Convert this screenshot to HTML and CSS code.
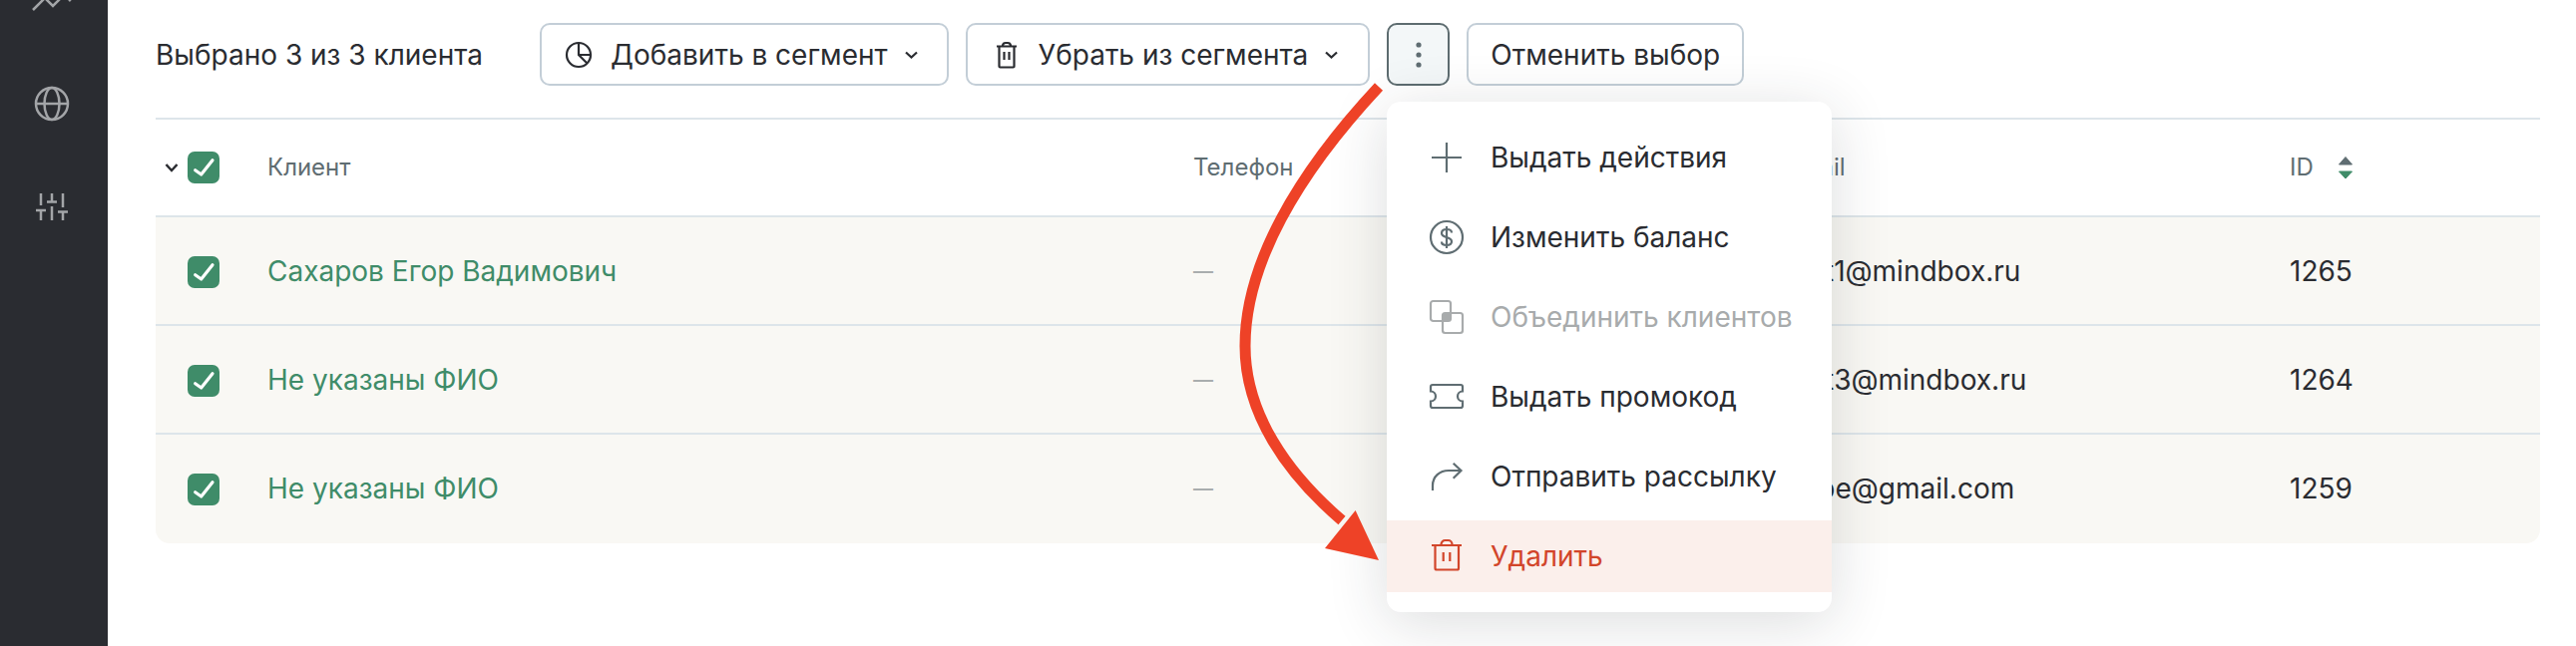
FILE: index.html
```html
<!DOCTYPE html>
<html lang="ru">
<head>
<meta charset="utf-8">
<title>Клиенты</title>
<link rel="stylesheet" href="styles.css">
</head>
<body>
<div class="app">
  <aside class="sidebar">
    <svg class="nav nav-chart" width="44" height="14" viewBox="0 0 44 14"><path d="M3 10L15 -2L23 6L31 -2M39 1L41 -1"/></svg>
    <svg class="nav nav-globe" width="36" height="36" viewBox="0 0 36 36"><circle cx="18" cy="18" r="16"/><ellipse cx="18" cy="18" rx="7.500" ry="16"/><path d="M2 18H34"/></svg>
    <svg class="nav nav-sliders" width="36" height="28" viewBox="0 0 36 28"><path d="M7 0V12M2 17H12M7 17V27M18 0V8.500M13 8.500H23M18 13V27M29 0V14M24 18.500H34M29 18.500V27"/></svg>
  </aside>
  <main class="content">
    <div class="toolbar">
      <span class="selected">Выбрано 3 из 3 клиента</span>
      <div class="actions">
        <button class="btn drop">
          <svg class="ic" width="28" height="28" viewBox="0 0 28 28"><circle cx="14" cy="14" r="12"/><path d="M14 2V14L22.500 22.500M14 14H26"/></svg>
          <span>Добавить в сегмент</span>
          <svg class="chev" width="15" height="8" viewBox="0 0 15 8"><path d="M2 1.500L7.500 6.500L13 1.500"/></svg>
        </button>
        <button class="btn drop wide">
          <svg class="ic" width="28" height="28" viewBox="0 0 28 28"><path d="M4 5.500H24M6.500 5.500V25.500Q6.500 26.500 7.500 26.500H20.500Q21.500 26.500 21.500 25.500V5.500M10 5.500V4.500A3 3 0 0 1 13 2H15A3 3 0 0 1 18 4.500V5.500M11.500 11V19M16.500 11V19"/></svg>
          <span>Убрать из сегмента</span>
          <svg class="chev" width="15" height="8" viewBox="0 0 15 8"><path d="M2 1.500L7.500 6.500L13 1.500"/></svg>
        </button>
        <button class="btn kebab" aria-label="Ещё">
          <svg width="6" height="26" viewBox="0 0 6 26"><circle cx="3" cy="3" r="2.600"/><circle cx="3" cy="13" r="2.600"/><circle cx="3" cy="23" r="2.600"/></svg>
        </button>
        <button class="btn">Отменить выбор</button>
      </div>
    </div>

    <div class="table">
      <div class="row head">
        <div class="c-check">
          <svg class="head-chev" width="14" height="9" viewBox="0 0 14 9"><path d="M1.500 1L7 7L12.500 1"/></svg>
          <span class="check"><svg width="32" height="32" viewBox="0 0 32 32"><path d="M7.700 18.700L13.700 23L25 8.700"/></svg></span>
        </div>
        <div class="label">Клиент</div>
        <div class="label">Телефон</div>
        <div class="label">Email</div>
        <div class="label c-id">ID
          <svg class="sort" width="14" height="22" viewBox="0 0 14 22"><path class="up" d="M7 0.500L13.500 8H0.500Z"/><path class="down" d="M0.500 15H13.500L7 22Z"/></svg>
        </div>
      </div>
      <div class="row body">
        <div class="c-check"><span class="check"><svg width="32" height="32" viewBox="0 0 32 32"><path d="M7.700 18.700L13.700 23L25 8.700"/></svg></span></div>
        <div class="link">Сахаров Егор Вадимович</div>
        <div class="dash">—</div>
        <div>test1@mindbox.ru</div>
        <div>1265</div>
      </div>
      <div class="row body">
        <div class="c-check"><span class="check"><svg width="32" height="32" viewBox="0 0 32 32"><path d="M7.700 18.700L13.700 23L25 8.700"/></svg></span></div>
        <div class="link">Не указаны ФИО</div>
        <div class="dash">—</div>
        <div>test3@mindbox.ru</div>
        <div>1264</div>
      </div>
      <div class="row body last">
        <div class="c-check"><span class="check"><svg width="32" height="32" viewBox="0 0 32 32"><path d="M7.700 18.700L13.700 23L25 8.700"/></svg></span></div>
        <div class="link">Не указаны ФИО</div>
        <div class="dash">—</div>
        <div>hope@gmail.com</div>
        <div>1259</div>
      </div>
    </div>
  </main>

  <div class="menu">
    <div class="item">
      <svg class="mi" width="36" height="36" viewBox="0 0 36 36"><path d="M18 3V33M3 18H33"/></svg>
      <span>Выдать действия</span>
    </div>
    <div class="item">
      <svg class="mi" width="36" height="36" viewBox="0 0 36 36"><circle cx="18" cy="18" r="16"/><path d="M23 13.500C23 11 20.500 10 18 10S13 11.200 13 14S15.500 17.300 18 18S23 19.500 23 22.300S20.500 26 18 26S13 25 13 22.500M18 7V29"/></svg>
      <span>Изменить баланс</span>
    </div>
    <div class="item disabled">
      <svg class="mi" width="36" height="36" viewBox="0 0 36 36"><rect x="2" y="2" width="20" height="20" rx="2.500"/><rect x="14" y="14" width="20" height="20" rx="2.500"/><rect class="fill" x="14" y="14" width="8" height="8" rx="1.500"/></svg>
      <span>Объединить клиентов</span>
    </div>
    <div class="item">
      <svg class="mi" width="36" height="36" viewBox="0 0 36 36"><path d="M4 6H32Q34 6 34 8V12.500A4.500 4.500 0 0 0 34 22.500V27Q34 29 32 29H4Q2 29 2 27V22.500A4.500 4.500 0 0 0 2 12.500V8Q2 6 4 6Z"/></svg>
      <span>Выдать промокод</span>
    </div>
    <div class="item">
      <svg class="mi" width="36" height="36" viewBox="0 0 36 36"><path d="M4 32V27C4 18 11 12 20 12H32.500M24.700 4.700L32.500 12L24.700 19.700"/></svg>
      <span>Отправить рассылку</span>
    </div>
    <div class="item danger">
      <svg class="mi" width="36" height="36" viewBox="0 0 36 36"><path d="M3 7H33M6.500 7V30Q6.500 31.500 8 31.500H28.500Q30 31.500 30 30V7M12.500 7V6A4 4 0 0 1 16.500 2H19.500A4 4 0 0 1 23.500 6V7M14.700 14V23M21.300 14V23"/></svg>
      <span>Удалить</span>
    </div>
  </div>

  <svg class="arrow" width="180" height="490" viewBox="1220 80 180 490">
    <path class="shaft" d="M1382 87C1300 175 1248 265 1248 347C1248 415 1290 475 1345 522"/>
    <path class="tip" d="M1358.600 512L1382 562L1328 550Z"/>
  </svg>
</div>
</body>
</html>
```
FILE: styles.css
```css
* { box-sizing: border-box; }
html, body { margin: 0; height: 100%; background: #fff; }
body { font-family: Inter, "Noto Sans", sans-serif; color: #2a2c31; font-size: 28px; overflow: hidden; }
button { font: inherit; color: inherit; }
svg { display: block; flex: none; }

.app { position: relative; display: flex; height: 648px; }

.sidebar { width: 108px; flex: none; background: #2a2c31; position: relative; overflow: hidden; display: flex; flex-direction: column; align-items: center; padding: 86px 4px 0 0; }
.nav { fill: none; stroke: #a3a5a8; stroke-width: 2.500; }
.nav-chart { position: absolute; left: 30px; top: 0; }
.nav-globe { margin-bottom: 72px; }

.content { flex: 1; padding: 23px 36px 0 48px; min-width: 0; }
.toolbar { display: flex; align-items: center; height: 63px; margin-bottom: 32px; }
.selected { width: 385px; flex: none; }
.actions { display: flex; gap: 17px; }
.btn { height: 63px; padding: 0 22px; background: #fff; border: 2px solid #c3ced7; border-radius: 10px; display: flex; align-items: center; white-space: nowrap; }
.drop { padding: 0 28px 0 23px; }
.wide { padding: 0 29px 0 25px; }
.btn .ic { fill: none; stroke: #2a2c31; stroke-width: 2.200; margin-right: 18px; }
.chev { fill: none; stroke: #2a2c31; stroke-width: 2.200; margin-left: 16px; }
.kebab { width: 63px; padding: 0; justify-content: center; background: #f3f7f8; border-color: #5d6c70; }
.kebab svg { fill: #5f6d72; }

.table { border-top: 2px solid #dde5ea; }
.row { display: grid; grid-template-columns: 112px 928px 593px 506px 1fr; align-items: center; }
.head { height: 96px; color: #5f6d72; font-size: 24px; }
.label { padding-bottom: 2px; }
.body { height: 109px; background: #f9f8f4; border-top: 2px solid #dde5ea; }
.last { border-radius: 0 0 14px 14px; height: 111px; padding-bottom: 2px; }
.c-check { position: relative; display: flex; padding-left: 32px; }
.check { width: 32px; height: 32px; border-radius: 7px; background: #3f8c69; display: block; }
.body .check { margin-top: 3px; }
.check svg { fill: none; stroke: #fff; stroke-width: 3.200; stroke-linecap: round; stroke-linejoin: round; }
.head-chev { position: absolute; left: 9px; top: 12px; fill: none; stroke: #2a2c31; stroke-width: 2.500; }
.link { color: #3f8c69; }
.dash { color: #a9adae; font-size: 20px; font-weight: 600; }
.c-id { display: flex; align-items: center; gap: 25px; }
.sort { margin-top: 2px; }
.sort .up { fill: #5f6d72; stroke: #5f6d72; stroke-width: 1; stroke-linejoin: round; }
.sort .down { fill: #3f8c69; stroke: #3f8c69; stroke-width: 1; stroke-linejoin: round; }

.menu { position: absolute; left: 1390px; top: 102px; width: 446px; height: 512px; padding-top: 20px; background: #fff; border-radius: 14px; box-shadow: 0 10px 60px rgba(40, 45, 50, .16); display: flex; flex-direction: column; gap: 8px; }
.item { height: 72px; flex: none; padding-left: 42px; display: flex; align-items: center; gap: 26px; }
.mi { fill: none; stroke: #5f6d72; stroke-width: 2.200; }
.disabled { color: #a8abac; }
.disabled .mi { stroke: #a8abac; }
.disabled .mi .fill { fill: #a8abac; stroke: none; }
.danger { background: #fbefeb; color: #d2452a; }
.danger .mi { stroke: #d2452a; }

.arrow { position: absolute; left: 1220px; top: 80px; overflow: visible; pointer-events: none; }
.shaft { fill: none; stroke: #ee4227; stroke-width: 11; }
.tip { fill: #ee4227; }
```
